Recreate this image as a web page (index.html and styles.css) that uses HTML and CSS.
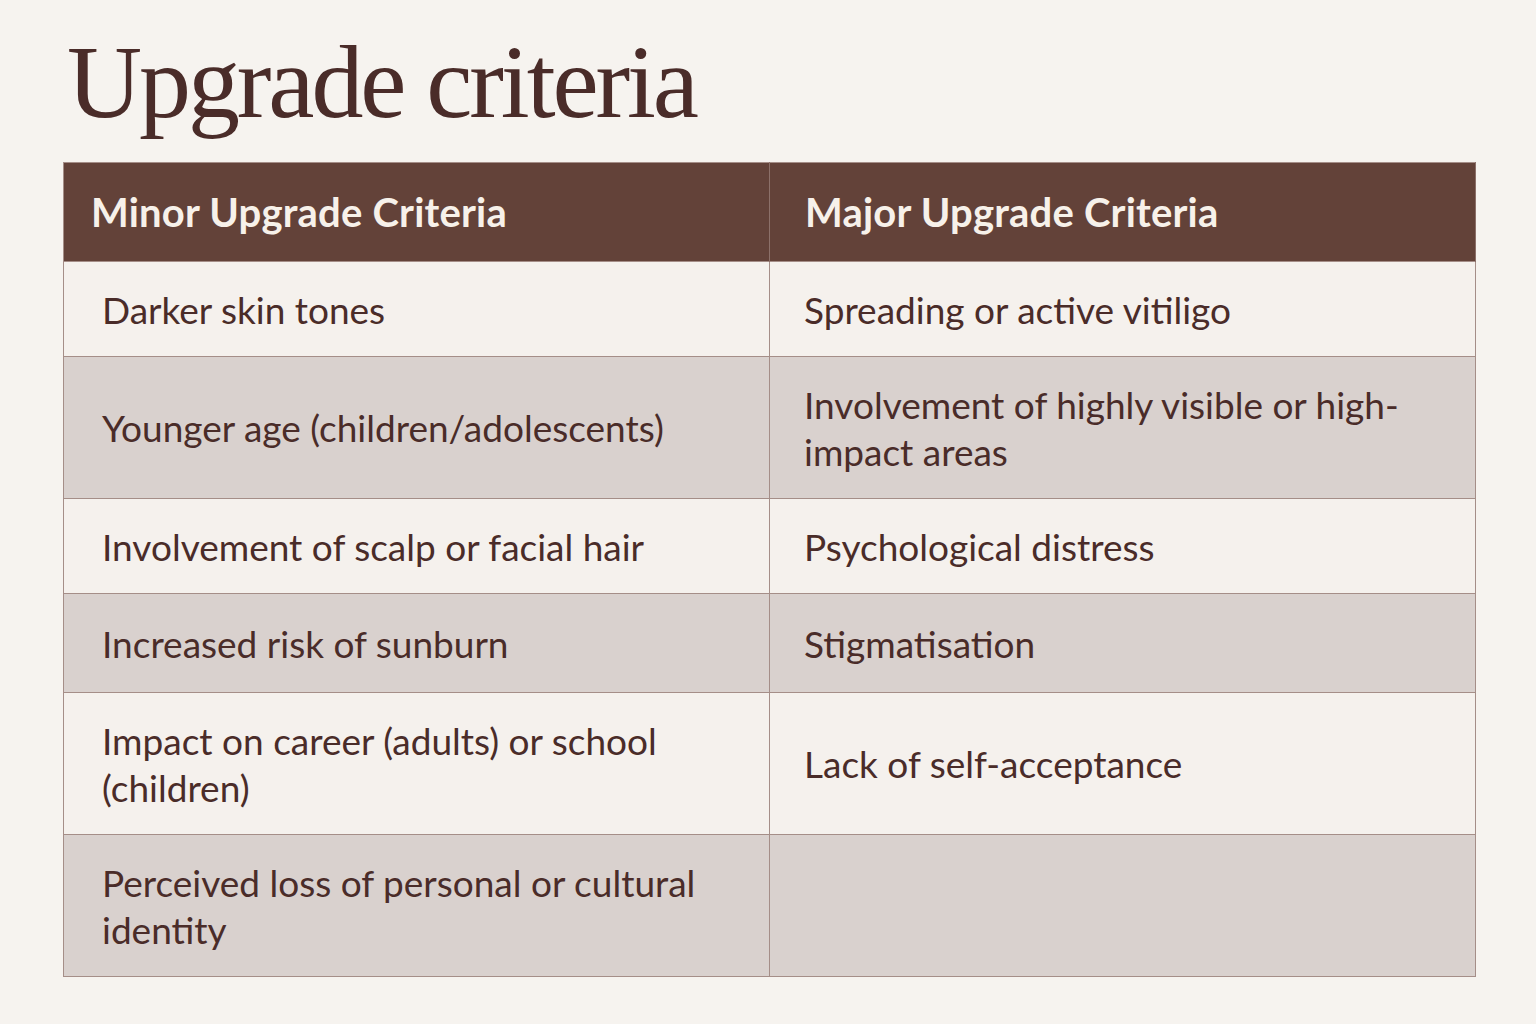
FILE: index.html
```html
<!DOCTYPE html>
<html lang="en">
<head>
<meta charset="utf-8">
<title>Upgrade criteria</title>
<link rel="stylesheet" href="styles.css">
</head>
<body>
<main class="page">
  <h1 class="title">Upgrade criteria</h1>
  <table class="criteria">
    <thead>
      <tr>
        <th>Minor Upgrade Criteria</th>
        <th>Major Upgrade Criteria</th>
      </tr>
    </thead>
    <tbody>
      <tr class="light">
        <td>Darker skin tones</td>
        <td class="right">Spreading or active vitiligo</td>
      </tr>
      <tr class="shade">
        <td>Younger age (children/adolescents)</td>
        <td class="right">Involvement of highly visible or high-<br>impact areas</td>
      </tr>
      <tr class="light">
        <td>Involvement of scalp or facial hair</td>
        <td class="right">Psychological distress</td>
      </tr>
      <tr class="shade tall">
        <td>Increased risk of sunburn</td>
        <td class="right">Stigmatisation</td>
      </tr>
      <tr class="light">
        <td>Impact on career (adults) or school<br>(children)</td>
        <td class="right">Lack of self-acceptance</td>
      </tr>
      <tr class="shade">
        <td>Perceived loss of personal or cultural<br>identity</td>
        <td class="right"></td>
      </tr>
    </tbody>
  </table>
</main>
</body>
</html>
```
FILE: styles.css
```css
html, body {
  margin: 0;
  padding: 0;
  background: #f6f3ef;
}

.page {
  padding: 30px 60px 0 63px;
  color: #4a2c29;
}

.title {
  margin: 0 0 0 4px;
  height: 132px;
  font-family: "Liberation Serif", "Times New Roman", serif;
  font-weight: 400;
  font-size: 104px;
  line-height: 104px;
  letter-spacing: -3.1px;
  color: #4a2c29;
}

.criteria {
  width: 1413px;
  border-collapse: collapse;
  table-layout: fixed;
  font-family: "Lato", "Liberation Sans", sans-serif;
  border: 1px solid #a58e88;
}

.criteria th {
  background: #634239;
  color: #f7f1ea;
  text-align: left;
  font-weight: 700;
  font-size: 40px;
  letter-spacing: 0.2px;
  height: 99px;
  padding: 0 0 0 27px;
  box-sizing: border-box;
  border-right: 1px solid #8c7069;
}

.criteria th + th {
  padding-left: 35px;
}

.criteria td {
  font-size: 37px;
  line-height: 47px;
  padding: 23.5px 20px 23.5px 38px;
  border: 1px solid #a58e88;
  vertical-align: middle;
}

.criteria td.right {
  padding-left: 34px;
}

.criteria tr.light td {
  background: #f5f1ed;
}

.criteria tr.shade td {
  background: #d9d1ce;
}

.criteria tr.tall td {
  padding-top: 25.5px;
  padding-bottom: 25.5px;
}
```
